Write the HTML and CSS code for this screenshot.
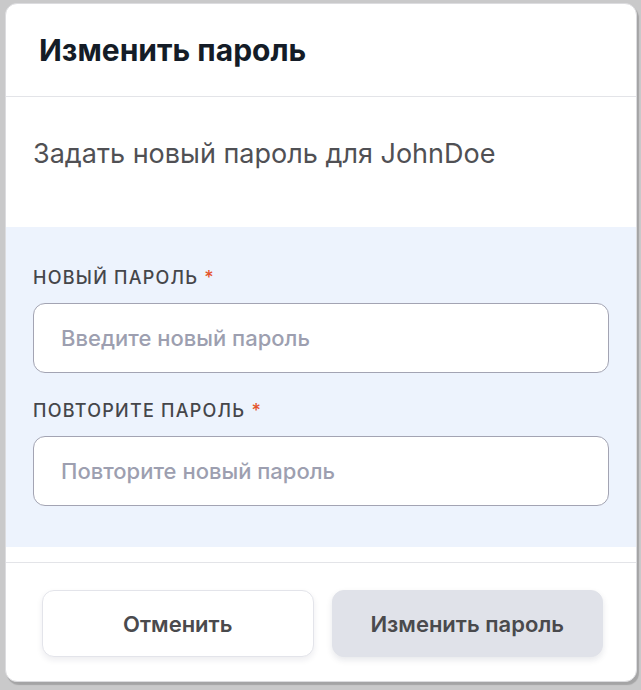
FILE: index.html
```html
<!DOCTYPE html>
<html lang="ru">
<head>
<meta charset="utf-8">
<title>Изменить пароль</title>
<link rel="stylesheet" href="styles.css">
</head>
<body>
<div class="backdrop">
  <div class="modal">
    <header class="modal-header">
      <h1 class="modal-title">Изменить пароль</h1>
    </header>
    <div class="modal-body">
      <p class="intro">Задать новый пароль для JohnDoe</p>
      <div class="fields">
        <label class="field">
          <span class="label">НОВЫЙ ПАРОЛЬ <span class="req">*</span></span>
          <input class="input" type="password" placeholder="Введите новый пароль">
        </label>
        <label class="field">
          <span class="label">ПОВТОРИТЕ ПАРОЛЬ <span class="req">*</span></span>
          <input class="input" type="password" placeholder="Повторите новый пароль">
        </label>
      </div>
    </div>
    <footer class="modal-footer">
      <button class="btn btn-cancel" type="button">Отменить</button>
      <button class="btn btn-primary" type="button">Изменить пароль</button>
    </footer>
  </div>
</div>
</body>
</html>
```

FILE: styles.css
```css
* { box-sizing: border-box; }

html, body {
  margin: 0;
  padding: 0;
  height: 100%;
}

body {
  background: #c9c9ca;
  font-family: Inter, "Noto Sans", "Liberation Sans", sans-serif;
  overflow: hidden;
}

.backdrop {
  padding: 3px 0 0 5px;
}

.modal {
  width: 632px;
  height: 679px;
  background: #ffffff;
  border: 1px solid #dcdcdf;
  border-radius: 12px;
  box-shadow: 2px 3px 1px rgba(0, 0, 0, 0.18);
  display: flex;
  flex-direction: column;
  overflow: hidden;
}

.modal-header {
  padding: 0 33px;
  height: 93px;
  border-bottom: 1px solid #e3e4e8;
  display: flex;
  align-items: center;
}

.modal-title {
  margin: 0;
  font-size: 30px;
  font-weight: 700;
  color: #141c27;
  line-height: 1.2;
}

.modal-body {
  padding-bottom: 15px;
  border-bottom: 1px solid #e3e4e8;
}

.intro {
  margin: 0;
  padding: 41px 27px 57px;
  font-size: 27px;
  line-height: 32px;
  color: #505054;
  font-weight: 400;
}

.fields {
  background: #edf3fd;
  padding: 39px 27px 41px;
  display: flex;
  flex-direction: column;
  gap: 26px;
}

.field {
  display: flex;
  flex-direction: column;
  gap: 13px;
}

.label {
  font-size: 18px;
  line-height: 24px;
  font-weight: 500;
  letter-spacing: 1.25px;
  color: #45464a;
}

.req {
  color: #e4532c;
}

.input {
  height: 70px;
  width: 100%;
  border: 1px solid #a3a4b3;
  border-radius: 12px;
  background: #ffffff;
  padding: 0 27px;
  font-family: inherit;
  font-size: 22px;
  font-weight: 500;
  color: #333;
  outline: none;
}

.input::placeholder {
  color: #9d9fb0;
}

.modal-footer {
  flex: 1;
  display: flex;
  gap: 18px;
  padding: 27px 33px 0 36px;
  align-items: flex-start;
}

.btn {
  flex: 1;
  height: 67px;
  border-radius: 12px;
  font-family: inherit;
  font-size: 22px;
  font-weight: 600;
  color: #4a4a4d;
  cursor: pointer;
}

.btn-cancel {
  background: #ffffff;
  border: 1px solid #e3e4ea;
  box-shadow: 0 3px 6px rgba(20, 30, 60, 0.08);
}

.btn-primary {
  background: #e0e2e9;
  border: 1px solid #e0e2e9;
  box-shadow: 0 3px 6px rgba(20, 30, 60, 0.1);
}
```
